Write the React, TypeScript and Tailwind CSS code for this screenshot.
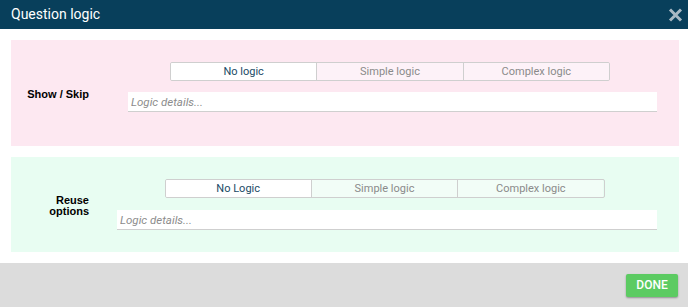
import React from 'react';

type Tone = 'pink' | 'green';

const SegmentedLogic: React.FC<{ first: string; tone: Tone }> = ({ first, tone }) => {
  const idle = tone === 'pink' ? 'bg-[#fdf2f8]' : 'bg-[#f2fdf7]';
  return (
    <div className="flex w-[440px] h-[19px] rounded-[2px] border border-[#cfcfcf] overflow-hidden text-[11px] leading-[17px]">
      <div className="flex-1 bg-white text-[#1a4a66] text-center">{first}</div>
      <div className={`flex-1 ${idle} text-[#8a8a8a] text-center border-l border-[#cfcfcf]`}>Simple logic</div>
      <div className={`flex-1 ${idle} text-[#8a8a8a] text-center border-l border-[#cfcfcf]`}>Complex logic</div>
    </div>
  );
};

const LogicInput: React.FC = () => (
  <input
    className="w-full h-[20px] bg-white border-b border-[#cfcfcf] px-[3px] text-[11.5px] italic outline-none placeholder:text-[#8c8c8c]"
    placeholder="Logic details..."
  />
);

export default function App() {
  return (
    <div className="w-[688px] h-[307px] flex flex-col bg-white" style={{ fontFamily: 'Roboto, "Liberation Sans", sans-serif' }}>
      {/* Header */}
      <div className="h-[29px] bg-[#083f5b] flex items-center justify-between pl-[11px] pr-[5px]">
        <span className="text-white text-[14px]">Question logic</span>
        <svg width="15" height="14" viewBox="0 0 15 14" className="text-[#a9b9c4]">
          <path d="M2 1.5 L13 12.5 M13 1.5 L2 12.5" stroke="currentColor" strokeWidth="3" strokeLinecap="butt" />
        </svg>
      </div>

      {/* Body */}
      <div className="flex-1 flex flex-col gap-[11px] pl-[11px] pr-[9px] pt-[11px]">
        <div className="h-[106px] bg-[#fde8f1] flex items-center pr-[22px] pb-[12px]">
          <div className="w-[78px] text-right text-[11px] font-bold text-black leading-[12px] pt-[13px]" style={{ fontFamily: '"Liberation Sans", Arial, sans-serif' }}>
            Show / Skip
          </div>
          <div className="flex-1 ml-[39px] flex flex-col items-center gap-[11px]">
            <div className="pr-[5px]">
              <SegmentedLogic first="No logic" tone="pink" />
            </div>
            <LogicInput />
          </div>
        </div>

        <div className="h-[95px] bg-[#e8fdf2] flex items-center pr-[22px]">
          <div className="w-[78px] text-right text-[11px] font-bold text-black leading-[11px] pt-[3px]" style={{ fontFamily: '"Liberation Sans", Arial, sans-serif' }}>
            Reuse
            <br />
            options
          </div>
          <div className="flex-1 ml-[28px] flex flex-col items-center gap-[12px]">
            <div className="pr-[5px]">
              <SegmentedLogic first="No Logic" tone="green" />
            </div>
            <LogicInput />
          </div>
        </div>
      </div>

      {/* Footer */}
      <div className="h-[44px] bg-[#dcdcdc] flex items-center justify-end pr-[10px]">
        <button className="w-[52px] h-[23px] rounded-[2px] bg-[#5ccb62] text-white text-[12px] font-medium shadow-[0_1px_2px_rgba(0,0,0,0.35)]">
          DONE
        </button>
      </div>
    </div>
  );
}
